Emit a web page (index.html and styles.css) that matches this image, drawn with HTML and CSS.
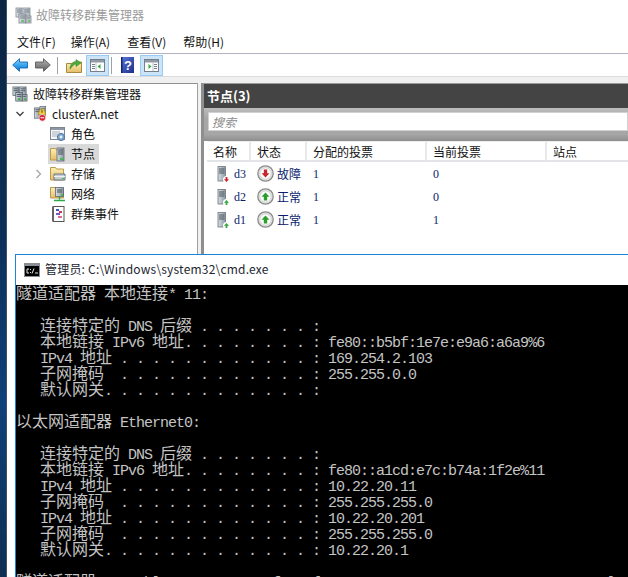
FILE: index.html
```html
<!DOCTYPE html>
<html lang="zh-CN">
<head>
<meta charset="utf-8">
<title>故障转移群集管理器</title>
<link rel="stylesheet" href="styles.css">
</head>
<body>
<svg class="defs" width="0" height="0" aria-hidden="true">
  <defs>
    <linearGradient id="gBlue" x1="0" y1="0" x2="0" y2="1"><stop offset="0" stop-color="#8fd6fb"/><stop offset=".5" stop-color="#38a6ef"/><stop offset="1" stop-color="#0f6fc4"/></linearGradient>
    <linearGradient id="gGray" x1="0" y1="0" x2="0" y2="1"><stop offset="0" stop-color="#b5b5b5"/><stop offset=".5" stop-color="#8a8a8a"/><stop offset="1" stop-color="#5e5e5e"/></linearGradient>
    <linearGradient id="gFold" x1="0" y1="0" x2="0" y2="1"><stop offset="0" stop-color="#fdf0b8"/><stop offset="1" stop-color="#e3bd66"/></linearGradient>
    <linearGradient id="gHelp" x1="0" y1="0" x2="1" y2="1"><stop offset="0" stop-color="#5a78d8"/><stop offset="1" stop-color="#1b2f8c"/></linearGradient>
    <linearGradient id="gSrv" x1="0" y1="0" x2="1" y2="0"><stop offset="0" stop-color="#d8dde2"/><stop offset="1" stop-color="#8d98a3"/></linearGradient>
    <symbol id="i-mgr" viewBox="0 0 17 17">
      <rect x="1" y="1" width="6" height="9" fill="url(#gSrv)" stroke="#5c6670" stroke-width=".8"/>
      <rect x="8" y="1" width="7" height="9" fill="url(#gSrv)" stroke="#5c6670" stroke-width=".8"/>
      <rect x="4" y="7" width="7" height="9" fill="url(#gSrv)" stroke="#4c5660" stroke-width=".8"/>
      <rect x="11" y="9" width="5" height="7" fill="#aab2ba" stroke="#5c6670" stroke-width=".8"/>
      <path d="M2 3h4M2 5h4M9 3h5M9 5h5M5 9h5M5 11h5M12 11h3" stroke="#4a5560" stroke-width="1"/>
      <rect x="6" y="13" width="3" height="2" fill="#3fae49"/><rect x="13" y="13" width="2" height="2" fill="#3fae49"/>
    </symbol>
    <symbol id="i-cluster" viewBox="0 0 16 17">
      <rect x="2" y="2" width="6" height="11" fill="url(#gSrv)" stroke="#69727c" stroke-width=".8"/>
      <rect x="8" y="0.5" width="6" height="10" fill="url(#gSrv)" stroke="#69727c" stroke-width=".8"/>
      <path d="M3 4h4M3 6h4M9 3h4M9 5h4" stroke="#56606a"/>
      <path d="M8 4l4-1 2 6H6z" fill="#f3cf3c" stroke="#b08b12" stroke-width=".6"/>
      <rect x="9.6" y="4.5" width="1" height="2.6" fill="#333"/>
      <circle cx="10.5" cy="12.5" r="3.6" fill="#d8263a" stroke="#fff" stroke-width=".7"/>
      <rect x="8.5" y="12" width="4" height="1" fill="#fff"/>
    </symbol>
    <symbol id="i-role" viewBox="0 0 16 16">
      <rect x="0.5" y="1.5" width="14" height="12" fill="#f4f6f8" stroke="#7d8790"/>
      <rect x="1" y="2" width="13" height="2" fill="#8c98a5"/>
      <path d="M2 6h8M2 8h6M2 10h5" stroke="#a8b2bc"/>
      <circle cx="11" cy="11" r="3.6" fill="#7fa4c8" stroke="#4f7aa5"/>
      <circle cx="11" cy="11" r="1.4" fill="#e8f0f8"/>
    </symbol>
    <symbol id="i-node" viewBox="0 0 16 16">
      <path d="M0.5 2.5h5l1 1.5h6v10h-12z" fill="url(#gFold)" stroke="#bb9a4b"/>
      <rect x="7" y="2" width="7" height="13" fill="url(#gSrv)" stroke="#5c6670" stroke-width=".8"/>
      <path d="M8 4h5M8 6h5M8 8h5" stroke="#46515c"/>
      <rect x="10" y="12" width="3" height="2" fill="#3fc04a"/>
    </symbol>
    <symbol id="i-store" viewBox="0 0 16 16">
      <path d="M0.5 1.5h5l1 1.5h7v11h-13z" fill="url(#gFold)" stroke="#bb9a4b"/>
      <path d="M4 8h11v6H4z" fill="#c6ccd2" stroke="#6a747e"/>
      <path d="M4 10.5h11" stroke="#eef0f2"/>
      <rect x="12" y="12" width="2" height="1" fill="#3fc04a"/>
    </symbol>
    <symbol id="i-net" viewBox="0 0 16 16">
      <path d="M0.5 1.5h5l1 1.5h7v9h-13z" fill="url(#gFold)" stroke="#bb9a4b"/>
      <rect x="5.5" y="1.5" width="8" height="9" fill="url(#gSrv)" stroke="#5c6670" stroke-width=".8"/>
      <path d="M7 4h5M7 6h5" stroke="#46515c"/>
      <path d="M9.5 10.5v3M4 14.5h11" stroke="#2da84a" stroke-width="1.4"/>
      <rect x="11" y="8" width="2" height="2" fill="#3fc04a"/>
    </symbol>
    <symbol id="i-log" viewBox="0 0 14 16">
      <rect x="2" y="0.5" width="11" height="15" fill="#fff" stroke="#555"/>
      <path d="M1 2h2M1 4h2M1 6h2M1 8h2M1 10h2M1 12h2M1 14h2" stroke="#222"/>
      <rect x="5" y="3" width="3" height="2" fill="#3a55c8"/>
      <rect x="8" y="5" width="3" height="2" fill="#c83a5a"/>
      <rect x="5" y="7" width="4" height="2" fill="#7a5ac0"/>
      <rect x="7" y="10" width="4" height="2" fill="#d86a9a"/>
    </symbol>
    <symbol id="i-arrow" viewBox="0 0 16 14">
      <path d="M0.7 7L7.5 0.7V4H15.5V10H7.5V13.3Z" stroke-width=".9" stroke-linejoin="round"/>
    </symbol>
    <symbol id="i-srv" viewBox="0 0 13 16">
      <rect x="1" y="0.5" width="7.500" height="14.500" fill="url(#gSrv)" stroke="#6b7580" stroke-width=".8"/>
      <path d="M2 3h5.500M2 5h5.500M2 7h5.500" stroke="#4b5660"/>
    </symbol>
    <symbol id="i-ring" viewBox="0 0 17 17">
      <circle cx="8.500" cy="8.500" r="7.700" fill="#e4e4e4" stroke="#8b8b8b" stroke-width="1.300"/>
      <circle cx="8.500" cy="8.500" r="5.600" fill="#fff" stroke="#c0c0c0" stroke-width=".6"/>
    </symbol>
  </defs>
</svg>

<div class="desktop">
  <div class="strip"></div>
  <div class="mmc">
    <header class="titlebar">
      <svg class="ico17 faded"><use href="#i-mgr"/></svg>
      <span class="title-text">故障转移群集管理器</span>
    </header>
    <nav class="menubar">
      <span>文件(F)</span><span>操作(A)</span><span>查看(V)</span><span>帮助(H)</span>
    </nav>
    <div class="toolbar">
      <svg class="arrow" fill="url(#gBlue)" stroke="#1668b0"><use href="#i-arrow"/></svg>
      <svg class="arrow flip" fill="url(#gGray)" stroke="#5a5a5a"><use href="#i-arrow"/></svg>
      <span class="tsep"></span>
      <svg class="tool-folder" viewBox="0 0 16 15">
        <path d="M0.5 5.5h6l1-1.5h8v10.5h-15z" fill="url(#gFold)" stroke="#a88a3e"/>
        <path d="M4 11C4 6 7 4 10 4V1.5L15 5l-5 3.500V6C8 6 6.500 8 4 11z" fill="#4aae3c" stroke="#2c7d22" stroke-width=".5"/>
      </svg>
      <span class="tbtn">
        <svg width="15" height="13" viewBox="0 0 15 13">
          <rect x="0.500" y="0.500" width="14" height="12" fill="#fff" stroke="#76808a"/>
          <rect x="1" y="1" width="13" height="2.500" fill="#8f9aa5"/>
          <path d="M2 5.500h3M2 7.500h3M2 9.500h3" stroke="#76808a"/>
          <path d="M10.500 5L7.500 7.500l3 2.500z" fill="#2fae3f"/>
          <path d="M6 3.500V12" stroke="#b8c0c8"/>
        </svg>
      </span>
      <span class="tsep sep2"></span>
      <svg class="tool-help" viewBox="0 0 13 16">
        <rect width="13" height="16" fill="url(#gHelp)"/>
        <rect x="0" y="0" width="1.500" height="16" fill="#142470"/>
        <text x="7" y="13" class="help-q">?</text>
      </svg>
      <span class="tbtn tbtn2">
        <svg width="15" height="13" viewBox="0 0 15 13">
          <rect x="0.500" y="0.500" width="14" height="12" fill="#fff" stroke="#76808a"/>
          <rect x="1" y="1" width="13" height="2.500" fill="#8f9aa5"/>
          <path d="M10 5.500h3M10 7.500h3M10 9.500h3" stroke="#76808a"/>
          <path d="M4.500 5L7.500 7.500l-3 2.500z" fill="#2fae3f"/>
          <path d="M9 3.500V12" stroke="#b8c0c8"/>
        </svg>
      </span>
    </div>
    <div class="band"></div>
    <div class="panes">
      <aside class="tree">
        <div class="row r0"><svg class="ico16"><use href="#i-mgr"/></svg><span>故障转移群集管理器</span></div>
        <div class="row r1">
          <svg class="chev" viewBox="0 0 8 8"><path d="M0.500 2l3.500 3.500L7.500 2" fill="none" stroke="#404040" stroke-width="1.300"/></svg>
          <svg class="ico16"><use href="#i-cluster"/></svg><span class="lat">clusterA.net</span>
        </div>
        <div class="row r2"><span class="pick"><svg class="ico16"><use href="#i-role"/></svg><span>角色</span></span></div>
        <div class="row r2"><span class="pick selected"><svg class="ico16"><use href="#i-node"/></svg><span>节点</span></span></div>
        <div class="row r2 haschev">
          <svg class="chev2" viewBox="0 0 8 10"><path d="M1.500 1l4 4-4 4" fill="none" stroke="#a6a6a6" stroke-width="1.300"/></svg>
          <span class="pick"><svg class="ico16"><use href="#i-store"/></svg><span>存储</span></span>
        </div>
        <div class="row r2"><span class="pick"><svg class="ico16"><use href="#i-net"/></svg><span>网络</span></span></div>
        <div class="row r2"><span class="pick"><svg class="ico16"><use href="#i-log"/></svg><span>群集事件</span></span></div>
      </aside>
      <div class="splitter"></div>
      <section class="content">
        <h1 class="content-head">节点(3)</h1>
        <div class="searchband"><div class="search">搜索</div></div>
        <div class="list">
          <div class="grid head">
            <span>名称</span><span>状态</span><span>分配的投票</span><span>当前投票</span><span>站点</span>
          </div>
          <div class="grid item">
            <span class="name"><span class="srv"><svg class="srv-i"><use href="#i-srv"/></svg><svg class="dot" viewBox="0 0 7 7"><circle cx="3.500" cy="3.500" r="3.500" fill="#fff"/><path d="M3.500 6L1 3.300h1.600V1h1.800v2.300H6z" fill="#d11f2e"/></svg></span>d3</span>
            <span class="state"><span class="ring"><svg class="ring-i"><use href="#i-ring"/></svg><svg class="ring-a" viewBox="0 0 9 9"><path d="M4.500 8.500L0.500 4.300H2.800V0.500H6.200V4.300H8.500z" fill="#c8242c"/></svg></span>故障</span>
            <span>1</span><span>0</span><span></span>
          </div>
          <div class="grid item">
            <span class="name"><span class="srv"><svg class="srv-i"><use href="#i-srv"/></svg><svg class="dot" viewBox="0 0 7 7"><circle cx="3.500" cy="3.500" r="3.500" fill="#fff"/><path d="M3.500 1L6 3.700H4.400V6H2.600V3.700H1z" fill="#36a83c"/></svg></span>d2</span>
            <span class="state"><span class="ring"><svg class="ring-i"><use href="#i-ring"/></svg><svg class="ring-a" viewBox="0 0 9 9"><path d="M4.500 0.500L8.500 4.700H6.200V8.500H2.800V4.700H0.500z" fill="#2c9e2c"/></svg></span>正常</span>
            <span>1</span><span>0</span><span></span>
          </div>
          <div class="grid item">
            <span class="name"><span class="srv"><svg class="srv-i"><use href="#i-srv"/></svg><svg class="dot" viewBox="0 0 7 7"><circle cx="3.500" cy="3.500" r="3.500" fill="#fff"/><path d="M3.500 1L6 3.700H4.400V6H2.600V3.700H1z" fill="#36a83c"/></svg></span>d1</span>
            <span class="state"><span class="ring"><svg class="ring-i"><use href="#i-ring"/></svg><svg class="ring-a" viewBox="0 0 9 9"><path d="M4.500 0.500L8.500 4.700H6.200V8.500H2.800V4.700H0.500z" fill="#2c9e2c"/></svg></span>正常</span>
            <span>1</span><span>1</span><span></span>
          </div>
        </div>
      </section>
    </div>
  </div>

  <div class="cmd">
    <div class="cmd-title">
      <svg class="cmd-ico" viewBox="0 0 16 14">
        <rect width="16" height="14" fill="#8a8f96"/>
        <rect x="1" y="3" width="14" height="10" fill="#000"/>
        <path d="M5 6H3v4h2M6.500 6v1M6.500 9v1M8 10.500L10 5.500M11 10h3" fill="none" stroke="#e8e8e8"/>
      </svg>
      <span class="cmd-name">管理员: C:\Windows\system32\cmd.exe</span>
    </div>
    <pre class="console"><div class="ln"><b>隧道适配器</b> <b>本地连接</b>* 11:</div><div class="ln"></div><div class="ln">   <b>连接特定的</b> DNS <b>后缀</b> . . . . . . . : </div><div class="ln">   <b>本地链接</b> IPv6 <b>地址</b>. . . . . . . . : fe80::b5bf:1e7e:e9a6:a6a9%6</div><div class="ln">   IPv4 <b>地址</b> . . . . . . . . . . . . : 169.254.2.103</div><div class="ln">   <b>子网掩码</b>  . . . . . . . . . . . . : 255.255.0.0</div><div class="ln">   <b>默认网关</b>. . . . . . . . . . . . . : </div><div class="ln"></div><div class="ln"><b>以太网适配器</b> Ethernet0:</div><div class="ln"></div><div class="ln">   <b>连接特定的</b> DNS <b>后缀</b> . . . . . . . : </div><div class="ln">   <b>本地链接</b> IPv6 <b>地址</b>. . . . . . . . : fe80::a1cd:e7c:b74a:1f2e%11</div><div class="ln">   IPv4 <b>地址</b> . . . . . . . . . . . . : 10.22.20.11</div><div class="ln">   <b>子网掩码</b>  . . . . . . . . . . . . : 255.255.255.0</div><div class="ln">   IPv4 <b>地址</b> . . . . . . . . . . . . : 10.22.20.201</div><div class="ln">   <b>子网掩码</b>  . . . . . . . . . . . . : 255.255.255.0</div><div class="ln">   <b>默认网关</b>. . . . . . . . . . . . . : 10.22.20.1</div><div class="ln"></div><div class="ln"><b>隧道适配器</b> Reusable ISATAP Interface {17EBA1A0-7017-4934-B93C-2B27D5126144}:</div></pre>
  </div>
</div>
</body>
</html>
```

FILE: styles.css
```css
* { box-sizing: border-box; }
html, body { margin: 0; padding: 0; height: 577px; overflow: hidden; background: #fff; }
body { font: 12px/16px "Noto Sans CJK SC", "Noto Sans", sans-serif; color: #111; }
.defs { position: absolute; }

.desktop { position: relative; display: flex; height: 577px; overflow: hidden; }
.strip { width: 7px; flex: none; background: linear-gradient(#0b2643 0, #0c2f58 40%, #0f4078 70%, #0e2f52 100%); border-right: 1px solid #3a5470; }
.mmc { flex: 1; min-width: 0; display: flex; flex-direction: column; background: #fff; }

.titlebar { height: 30px; display: flex; align-items: center; padding: 0 0 0 8px; color: #9a9a9a; }
.ico17 { width: 17px; height: 17px; flex: none; }
.faded { opacity: .75; }
.title-text { margin-left: 4px; }

.menubar { display: flex; align-items: center; gap: 17px; padding: 0 0 0 10px; border-bottom: 1px solid #b4b2c0; height: 24px; color: #111; }
.menubar span:first-child { margin-right: -2px; }

.toolbar { height: 22px; display: flex; align-items: center; padding-left: 5px; }
.arrow { width: 16px; height: 14px; flex: none; margin-right: 7px; }
.flip { transform: scaleX(-1); margin-right: 6px; }
.tsep { width: 1px; height: 17px; background: #a0a0a0; flex: none; }
.tool-folder { width: 16px; height: 15px; margin-left: 8px; flex: none; }
.tbtn { width: 23px; height: 21px; margin-left: 4px; display: flex; align-items: center; justify-content: center; background: #cbe4f8; border: 1px solid #96ccf5; flex: none; }
.sep2 { margin-left: 2px; }
.tool-help { width: 13px; height: 16px; margin-left: 9px; flex: none; }
.help-q { font: bold 13px "Liberation Sans", sans-serif; fill: #fff; text-anchor: middle; }
.tbtn2 { margin-left: 6px; }

.band { height: 7px; background: #f0f0f0; border-top: 1px solid #dcdcdc; flex: none; }

.panes { flex: 1; min-height: 0; display: flex; background: #f0f0f0; }
.tree { width: 190px; flex: none; background: #fff; border-top: 1px solid #8f8f8f; color: #111; }
.row { height: 20px; display: flex; align-items: center; white-space: nowrap; position: relative; }
.r0 { padding-left: 5px; gap: 5px; }
.r1 { padding-left: 9px; }
.r2 { padding-left: 41px; }
.ico16 { width: 16px; height: 16px; flex: none; }
.chev { width: 8px; height: 8px; margin-right: 8px; flex: none; }
.chev2 { width: 8px; height: 10px; position: absolute; left: 28px; }
.r1 .ico16 { margin-right: 4px; }
.lat { font-size: 12px; }
.pick { display: flex; align-items: center; gap: 5px; height: 20px; padding: 0 3px 0 2px; }
.selected { background: #d9d9d9; width: 51px; }

.splitter { width: 4px; flex: none; background: #f0f0f0; border-left: 1px solid #a0a0a0; }

.content { flex: 1; min-width: 0; display: flex; flex-direction: column; border-top: 1px solid #9a9a9a; border-left: 3px solid #8f8f8f; background: #fff; }
.content-head { margin: 0; height: 24px; flex: none; background: #444; color: #fff; font-size: 13px; font-weight: 700; line-height: 24px; padding-left: 3px; }
.searchband { height: 33px; flex: none; background: linear-gradient(#bdbdbd, #a6a6a6 30%, #a6a6a6 80%, #8e8e8e); padding: 4px 0 0 4px; }
.search { height: 19px; background: #fff; border: 1px solid #d0d0d0; color: #8c8c8c; font-style: italic; line-height: 17px; padding-left: 3px; }
.list { flex: 1; padding-left: 3px; background: #fff; }
.grid { display: grid; grid-template-columns: 44px 56px 120px 120px 1fr; align-items: center; }
.head { height: 21px; border-bottom: 2px solid #e2e4e8; border-top: 1px solid #eee; color: #111; }
.head span { padding-left: 6px; height: 19px; line-height: 19px; border-right: 2px solid #e6e8ec; }
.head span:last-child { border-right: 0; }
.item { height: 23px; color: #0a1c6b; font-family: "Liberation Serif", "Noto Sans CJK SC", serif; }
.item > span { padding-left: 6px; }
.name { display: flex; align-items: center; gap: 5px; padding-left: 10px !important; }
.srv { position: relative; width: 12px; height: 16px; flex: none; display: block; }
.srv-i { width: 13px; height: 16px; display: block; }
.dot { position: absolute; right: -1px; bottom: -1px; width: 7px; height: 7px; }
.state { display: flex; align-items: center; gap: 3px; font-family: "Noto Sans CJK SC", sans-serif; padding-left: 6px !important; }
.ring { position: relative; width: 17px; height: 17px; display: block; flex: none; }
.ring-i { width: 17px; height: 17px; display: block; }
.ring-a { position: absolute; left: 4px; top: 4px; width: 9px; height: 9px; }

.cmd { position: absolute; left: 15px; top: 254px; right: 0; bottom: 0; background: #fff; border-top: 1px solid #1a84d8; border-left: 1px solid #1a84d8; display: flex; flex-direction: column; overflow: hidden; }
.cmd-title { height: 30px; flex: none; display: flex; align-items: center; gap: 5px; padding-left: 8px; color: #1c2530; font-size: 12px; }
.cmd-name { letter-spacing: .2px; padding-bottom: 2px; }
.cmd-ico { width: 16px; height: 14px; flex: none; }
.console { margin: 0; flex: 1; background: #000; color: #c4c4c4; font: 15px/16px "Liberation Mono", monospace; letter-spacing: -1px; white-space: pre; overflow: hidden; }
.ln { height: 16px; line-height: 16px; }
.ln:first-child { margin-top: -1px; }
.ln b { font: 400 16px/16px "Noto Sans CJK SC", sans-serif; letter-spacing: 0; }
```
